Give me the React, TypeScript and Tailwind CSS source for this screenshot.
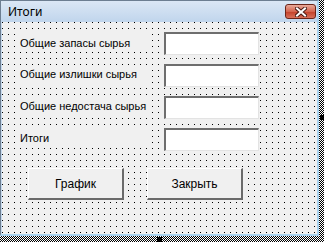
import React from "react";

const dots =
  "bg-[#f0f0f0] bg-[image:conic-gradient(from_0deg_at_1px_1px,transparent_270deg,#000_0)] bg-size-[6px_6px]";

const font = { fontFamily: '"Liberation Sans", Arial, sans-serif' };

function Label({ text, mt }: { text: string; mt: string }) {
  return (
    <div
      className={`w-[132px] h-[18px] ml-[14px] bg-[#f0f0f0] pl-[4px] leading-[18px] text-[11px] text-black whitespace-nowrap ${mt}`}
      style={font}
    >
      {text}
    </div>
  );
}

function TextBox() {
  return (
    <div className="ml-[16px] w-[95px] h-[23px] bg-white border-t-2 border-l-2 border-t-[#6e6e6e] border-l-[#6e6e6e] border-b border-r border-b-[#e3e3e3] border-r-[#e3e3e3]" />
  );
}

function Btn({ text, className }: { text: string; className: string }) {
  return (
    <div
      className={`w-[96px] h-[32px] bg-[#f0f0f0] border-t border-l border-t-white border-l-white border-b-2 border-r-2 border-b-[#6a6a6a] border-r-[#6a6a6a] flex items-center justify-center text-[12px] text-black ${className}`}
      style={font}
    >
      {text}
    </div>
  );
}

export default function App() {
  const rows = [
    { t: "Общие запасы сырья", mt: "mt-[-1px]" },
    { t: "Общие излишки сырья", mt: "mt-[-3px]" },
    { t: "Общие недостача сырья", mt: "mt-[-3px]" },
    { t: "Итоги", mt: "mt-[-4px]" },
  ];
  return (
    <div className="relative w-[324px] h-[242px] bg-white bg-[image:repeating-conic-gradient(#000_0_25%,#fff_0_50%)] bg-size-[2px_2px]">
      <div className="w-[319px] h-[236px] flex flex-col border-l border-t border-[#6d7e91] border-r-2 border-b-2 border-r-[#a9d3ef] border-b-[#a9d3ef]">
        <div className="h-[21px] flex items-center justify-between bg-[linear-gradient(#dbe7f5,#c0d5ec)] pl-[7px] pr-[1px]">
          <span
            className="text-[12px] text-black"
            style={{ fontFamily: '"Noto Sans", sans-serif' }}
          >
            Итоги
          </span>
          <div className="w-[31px] h-[15px] rounded-[3px] border border-[#6b2418] bg-[linear-gradient(#e9a99a,#d4654f_50%,#c4432c_55%,#d8705a)] flex items-center justify-center">
            <svg width="12" height="10" viewBox="0 0 12 10">
              <path d="M2 1.5 L10 8.5 M10 1.5 L2 8.5" stroke="#4a1a14" strokeWidth="4" strokeLinecap="square" />
              <path d="M2 1.5 L10 8.5 M10 1.5 L2 8.5" stroke="#fff" strokeWidth="2" strokeLinecap="square" />
            </svg>
          </div>
        </div>
        <div className={`flex-1 flex flex-col border-l border-[#c6d9ee] pt-[10px] ${dots}`}>
          {rows.map((r) => (
            <div key={r.t} className="h-[32px] flex items-start">
              <div className="h-[23px] flex items-center">
                <Label text={r.t} mt={r.mt} />
              </div>
              <TextBox />
            </div>
          ))}
          <div className="flex mt-[8px]">
            <Btn text="График" className="ml-[26px]" />
            <Btn text="Закрыть" className="ml-[23px]" />
          </div>
        </div>
      </div>
      <div className="absolute left-[157px] top-[237px] w-[5px] h-[5px] bg-black" />
      <div className="absolute left-[320px] top-[115px] w-[4px] h-[5px] bg-black" />
    </div>
  );
}
